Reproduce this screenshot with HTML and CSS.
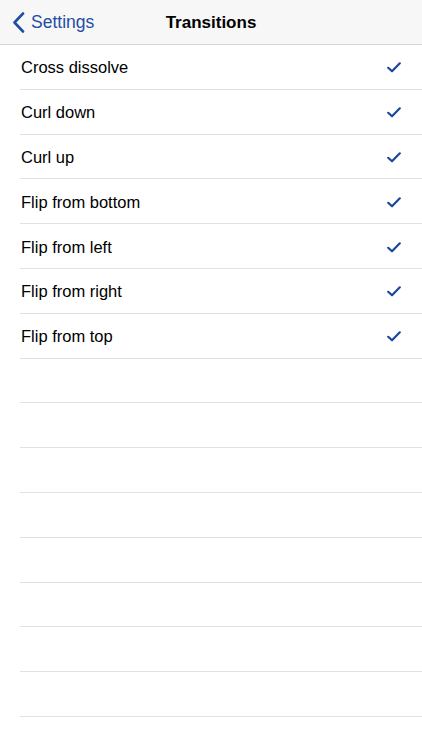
FILE: index.html
```html
<!DOCTYPE html>
<html>
<head>
<meta charset="utf-8">
<link rel="stylesheet" href="styles.css">
</head>
<body>
<header class="navbar">
  <a class="back">
    <svg class="chevron" width="13" height="21" viewBox="0 0 13 21"><path d="M11 1.5 L2.5 10.5 L11 19.5" fill="none" stroke="#1f4ea3" stroke-width="2.6" stroke-linecap="round" stroke-linejoin="round"/></svg>
    <span>Settings</span>
  </a>
  <h1 class="title">Transitions</h1>
</header>
<ul class="list">
  <li class="row"><span>Cross dissolve</span><svg class="check" width="14" height="11" viewBox="0 0 14 11"><path d="M1.2 5.8 L5 9.3 L12.8 1.3" fill="none" stroke="#1c479c" stroke-width="2.2" stroke-linecap="round" stroke-linejoin="round"/></svg></li>
  <li class="row"><span>Curl down</span><svg class="check" width="14" height="11" viewBox="0 0 14 11"><path d="M1.2 5.8 L5 9.3 L12.8 1.3" fill="none" stroke="#1c479c" stroke-width="2.2" stroke-linecap="round" stroke-linejoin="round"/></svg></li>
  <li class="row"><span>Curl up</span><svg class="check" width="14" height="11" viewBox="0 0 14 11"><path d="M1.2 5.8 L5 9.3 L12.8 1.3" fill="none" stroke="#1c479c" stroke-width="2.2" stroke-linecap="round" stroke-linejoin="round"/></svg></li>
  <li class="row"><span>Flip from bottom</span><svg class="check" width="14" height="11" viewBox="0 0 14 11"><path d="M1.2 5.8 L5 9.3 L12.8 1.3" fill="none" stroke="#1c479c" stroke-width="2.2" stroke-linecap="round" stroke-linejoin="round"/></svg></li>
  <li class="row"><span>Flip from left</span><svg class="check" width="14" height="11" viewBox="0 0 14 11"><path d="M1.2 5.8 L5 9.3 L12.8 1.3" fill="none" stroke="#1c479c" stroke-width="2.2" stroke-linecap="round" stroke-linejoin="round"/></svg></li>
  <li class="row"><span>Flip from right</span><svg class="check" width="14" height="11" viewBox="0 0 14 11"><path d="M1.2 5.8 L5 9.3 L12.8 1.3" fill="none" stroke="#1c479c" stroke-width="2.2" stroke-linecap="round" stroke-linejoin="round"/></svg></li>
  <li class="row"><span>Flip from top</span><svg class="check" width="14" height="11" viewBox="0 0 14 11"><path d="M1.2 5.8 L5 9.3 L12.8 1.3" fill="none" stroke="#1c479c" stroke-width="2.2" stroke-linecap="round" stroke-linejoin="round"/></svg></li>
  <li class="row empty"></li>
  <li class="row empty"></li>
  <li class="row empty"></li>
  <li class="row empty"></li>
  <li class="row empty"></li>
  <li class="row empty"></li>
  <li class="row empty"></li>
  <li class="row empty"></li>
</ul>
</body>
</html>
```
FILE: styles.css
```css
* { box-sizing: border-box; }
html, body {
  margin: 0;
  padding: 0;
  background: #ffffff;
  font-family: "Liberation Sans", Arial, sans-serif;
  color: #000;
  overflow: hidden;
}
.navbar {
  position: relative;
  height: 45px;
  padding-top: 2px;
  background: #f7f7f7;
  border-bottom: 1px solid #d6d6d6;
  display: flex;
  align-items: center;
  justify-content: center;
}
.back {
  position: absolute;
  left: 12px;
  top: 12px;
  display: flex;
  align-items: center;
  gap: 6px;
  color: #1f4ea3;
  font-size: 17.5px;
}
.chevron { display: block; }
.title {
  margin: 0;
  font-size: 17px;
  font-weight: bold;
  line-height: 20px;
}
.list {
  list-style: none;
  margin: 0;
  padding: 0 0 0 20px;
}
.row {
  height: 44.8px;
  border-bottom: 1px solid #e2e2e2;
  display: flex;
  align-items: center;
  justify-content: space-between;
  padding: 2px 21px 0 1px;
  font-size: 16.5px;
}
.check { display: block; }
```
